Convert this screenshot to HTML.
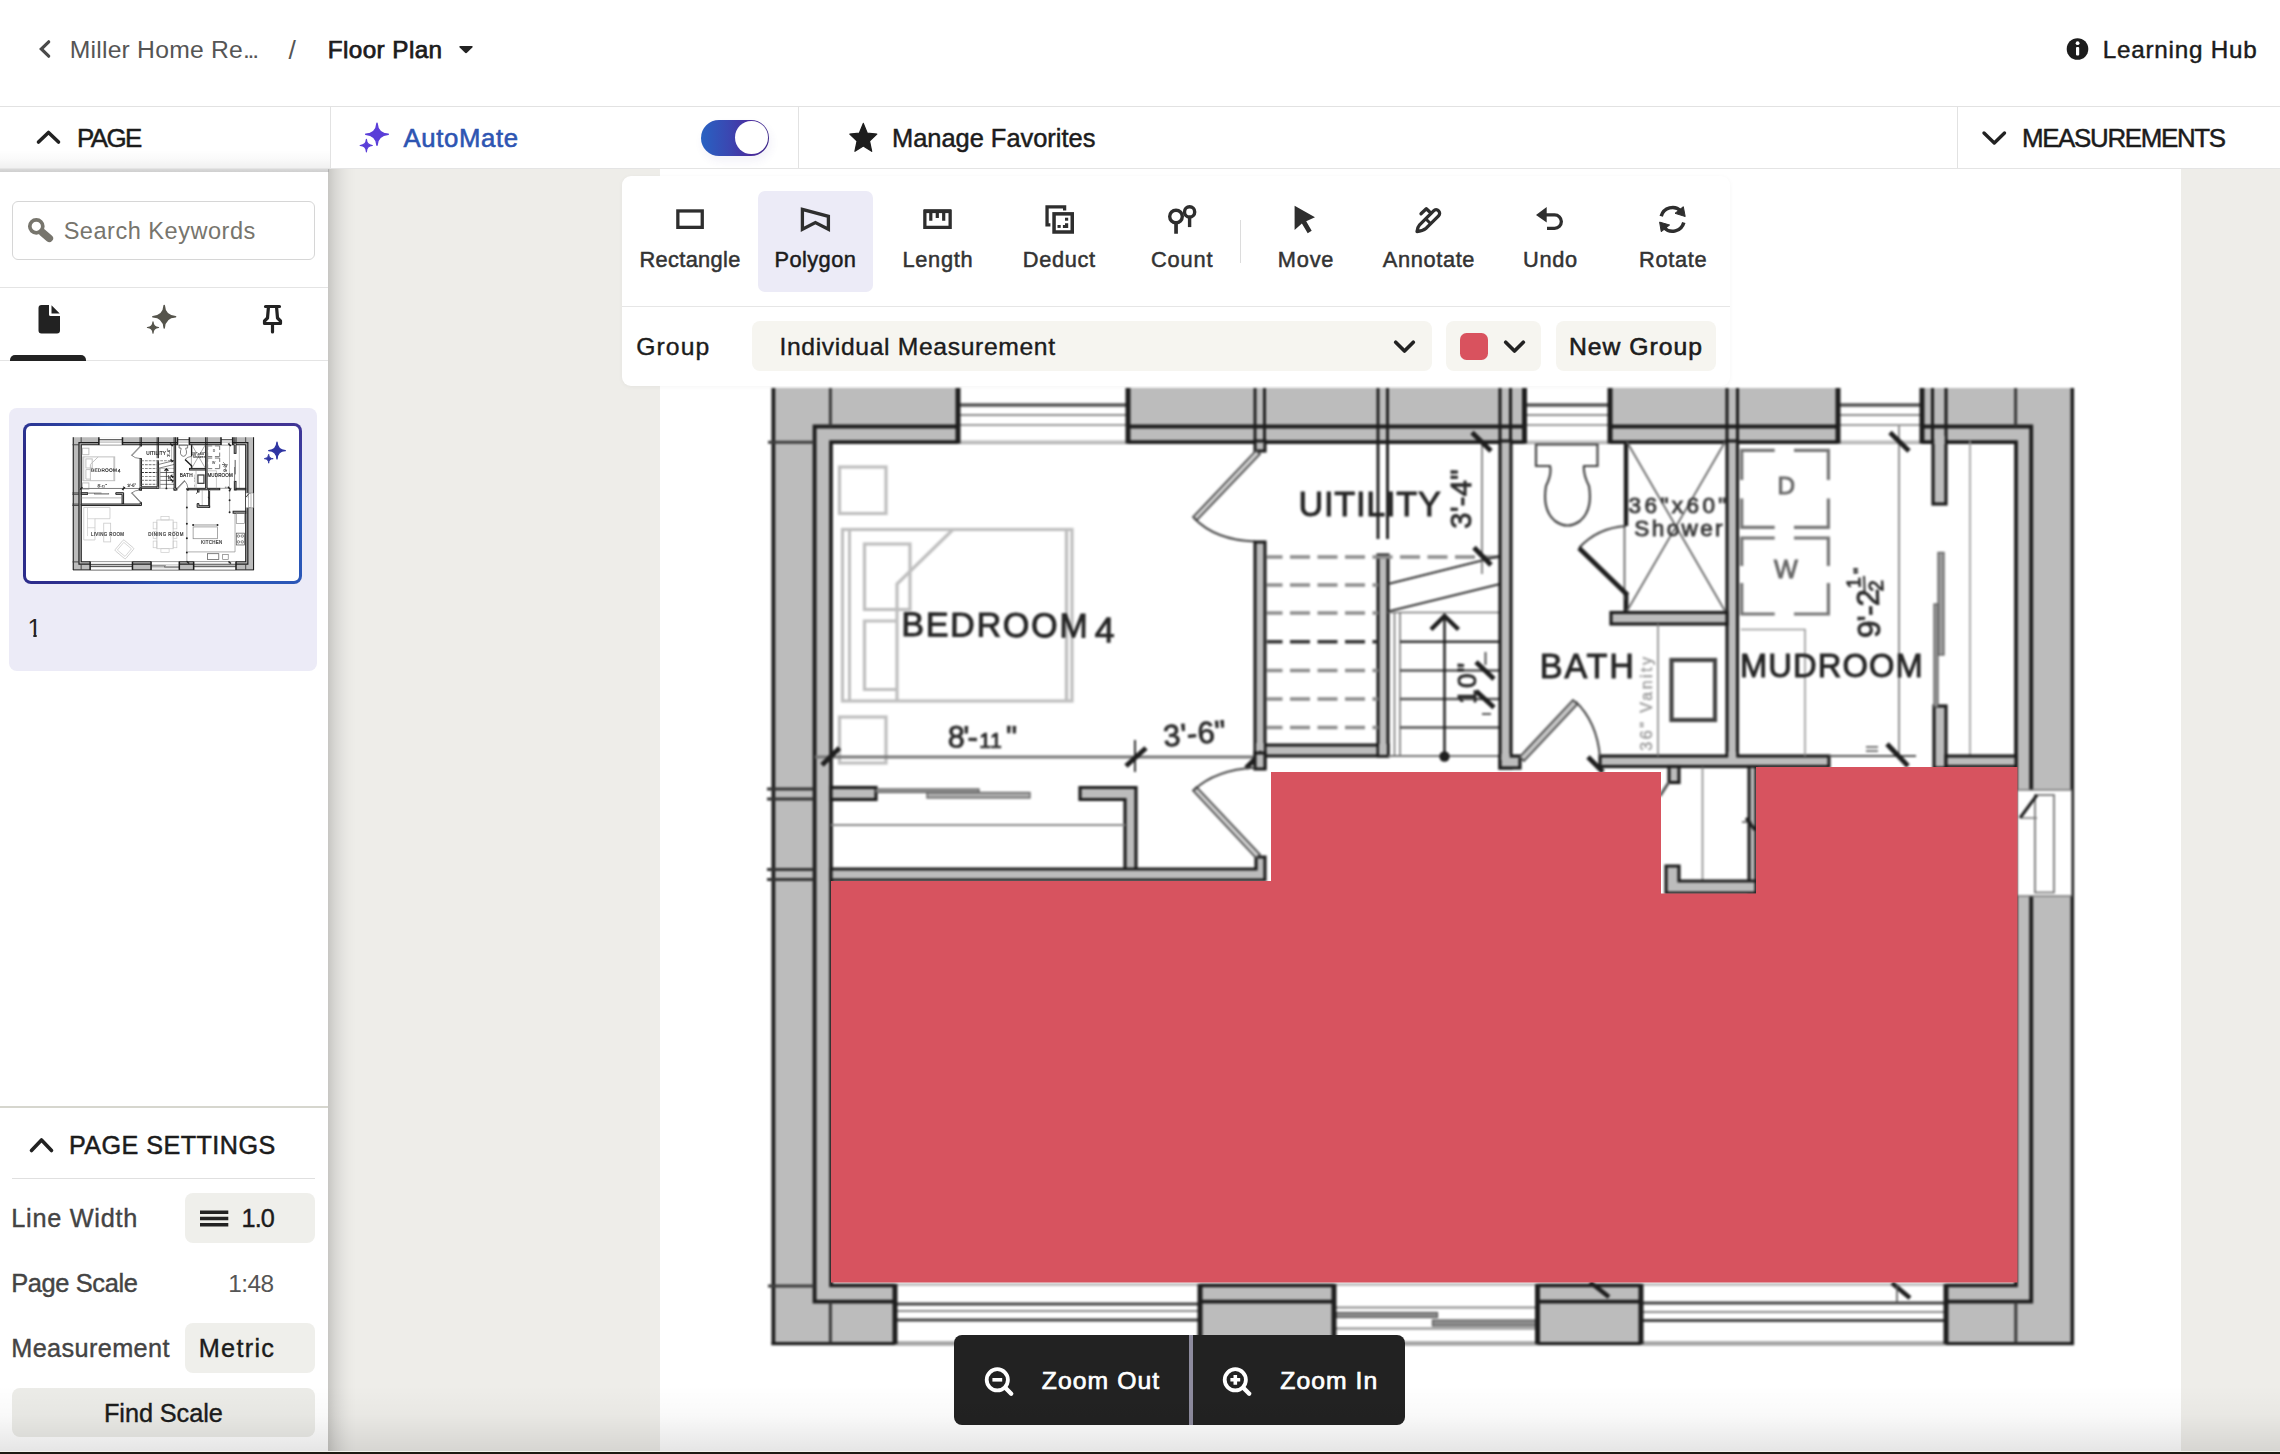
<!DOCTYPE html>
<html lang="en"><head><meta charset="utf-8"><title>Floor Plan</title>
<style>

html,body{margin:0;padding:0}
body{width:2280px;height:1454px;overflow:hidden;position:relative;background:#fff;font-family:"Liberation Sans",sans-serif;}
.t{position:absolute;white-space:nowrap;line-height:1;}
.a{position:absolute}
svg{position:absolute;overflow:visible}

</style></head>
<body>
<main>

<div class="a" style="left:0;top:169px;width:2280px;height:1285px;background:#eeede9"></div>
<div class="a" style="left:660px;top:169px;width:1521px;height:1285px;background:#fff"></div>

<svg style="left:0;top:0" width="2280" height="1454" font-family="Liberation Sans, sans-serif">
<g style="filter:blur(0.95px)"><path d="M771.5 388 H2074 V1345 H771.5Z M831 442 H2016 V1285 H831Z" fill="#bcbcbc" stroke="none" stroke-width="2.60" fill-rule="evenodd"/>
<path d="M814.6 426.5 H2031.2 V1301.6 H814.6Z" fill="none" stroke="#1e1e1e" stroke-width="3.90" />
<path d="M831 442.2 H2016 V1285.4 H831Z" fill="none" stroke="#1e1e1e" stroke-width="3.70" />
<line x1="773.4" y1="388" x2="773.4" y2="1345" stroke="#1e1e1e" stroke-width="3.70" />
<line x1="2072.3" y1="388" x2="2072.3" y2="1345" stroke="#1e1e1e" stroke-width="3.60" />
<line x1="771.5" y1="1343.7" x2="2074" y2="1343.7" stroke="#1e1e1e" stroke-width="3.20" />
<line x1="830.4" y1="388" x2="830.4" y2="426" stroke="#3c3c3c" stroke-width="3.00" />
<line x1="2015.6" y1="388" x2="2015.6" y2="426" stroke="#3c3c3c" stroke-width="3.00" />
<line x1="830.4" y1="1302" x2="830.4" y2="1343" stroke="#3c3c3c" stroke-width="3.00" />
<line x1="2015.8" y1="1302" x2="2015.8" y2="1343" stroke="#3c3c3c" stroke-width="3.00" />
<line x1="768" y1="442.2" x2="814" y2="442.2" stroke="#3c3c3c" stroke-width="3.00" />
<line x1="768" y1="1286" x2="814" y2="1286" stroke="#3c3c3c" stroke-width="3.00" />
<line x1="767" y1="789" x2="814" y2="789" stroke="#333" stroke-width="2.80" />
<line x1="767" y1="799" x2="814" y2="799" stroke="#333" stroke-width="2.80" />
<line x1="767" y1="869.5" x2="814" y2="869.5" stroke="#333" stroke-width="2.80" />
<line x1="767" y1="879.5" x2="814" y2="879.5" stroke="#333" stroke-width="2.80" />
<rect x="958" y="387" width="170.00" height="56.50" fill="#fff"/>
<line x1="958" y1="405" x2="1128" y2="405" stroke="#555" stroke-width="3.40" />
<line x1="958" y1="415" x2="1128" y2="415" stroke="#8a8a8a" stroke-width="1.80" />
<line x1="958" y1="425" x2="1128" y2="425" stroke="#9a9a9a" stroke-width="1.80" />
<line x1="958" y1="441.5" x2="1128" y2="441.5" stroke="#b5b5b5" stroke-width="1.80" />
<line x1="958" y1="388" x2="958" y2="443.5" stroke="#1e1e1e" stroke-width="5.00" />
<line x1="1128" y1="388" x2="1128" y2="443.5" stroke="#1e1e1e" stroke-width="5.00" />
<rect x="1524.5" y="387" width="85.50" height="56.50" fill="#fff"/>
<line x1="1524.5" y1="405" x2="1610" y2="405" stroke="#555" stroke-width="3.40" />
<line x1="1524.5" y1="415" x2="1610" y2="415" stroke="#8a8a8a" stroke-width="1.80" />
<line x1="1524.5" y1="425" x2="1610" y2="425" stroke="#9a9a9a" stroke-width="1.80" />
<line x1="1524.5" y1="441.5" x2="1610" y2="441.5" stroke="#b5b5b5" stroke-width="1.80" />
<line x1="1524.5" y1="388" x2="1524.5" y2="443.5" stroke="#1e1e1e" stroke-width="5.00" />
<line x1="1610" y1="388" x2="1610" y2="443.5" stroke="#1e1e1e" stroke-width="5.00" />
<rect x="1838" y="387" width="84.00" height="56.50" fill="#fff"/>
<line x1="1838" y1="405" x2="1922" y2="405" stroke="#555" stroke-width="3.40" />
<line x1="1838" y1="415" x2="1922" y2="415" stroke="#8a8a8a" stroke-width="1.80" />
<line x1="1838" y1="425" x2="1922" y2="425" stroke="#9a9a9a" stroke-width="1.80" />
<line x1="1838" y1="441.5" x2="1922" y2="441.5" stroke="#b5b5b5" stroke-width="1.80" />
<line x1="1838" y1="388" x2="1838" y2="443.5" stroke="#1e1e1e" stroke-width="5.00" />
<line x1="1922" y1="388" x2="1922" y2="443.5" stroke="#1e1e1e" stroke-width="5.00" />
<rect x="895" y="1283.5" width="305.00" height="61.00" fill="#fff"/>
<line x1="895" y1="1285" x2="1200" y2="1285" stroke="#aaa" stroke-width="1.60" />
<line x1="895" y1="1304" x2="1200" y2="1304" stroke="#444" stroke-width="3.20" />
<line x1="895" y1="1311" x2="1200" y2="1311" stroke="#8a8a8a" stroke-width="1.80" />
<line x1="895" y1="1320" x2="1200" y2="1320" stroke="#444" stroke-width="3.20" />
<line x1="895" y1="1342.5" x2="1200" y2="1342.5" stroke="#8a8a8a" stroke-width="2.00" />
<rect x="1641" y="1283.5" width="305.00" height="61.00" fill="#fff"/>
<line x1="1641" y1="1285" x2="1946" y2="1285" stroke="#aaa" stroke-width="1.60" />
<line x1="1641" y1="1303" x2="1946" y2="1303" stroke="#444" stroke-width="3.20" />
<line x1="1641" y1="1312" x2="1946" y2="1312" stroke="#8a8a8a" stroke-width="1.80" />
<line x1="1641" y1="1320.5" x2="1946" y2="1320.5" stroke="#444" stroke-width="3.20" />
<line x1="1641" y1="1342.5" x2="1946" y2="1342.5" stroke="#8a8a8a" stroke-width="2.00" />
<rect x="1334" y="1283.5" width="203.50" height="61.00" fill="#fff"/>
<line x1="1334" y1="1285" x2="1537.5" y2="1285" stroke="#aaa" stroke-width="1.60" />
<line x1="1334" y1="1307.5" x2="1537.5" y2="1307.5" stroke="#8a8a8a" stroke-width="1.80" />
<rect x="1336" y="1312.5" width="101.50" height="5.00" fill="#8c8c8c" stroke="#555" stroke-width="1.20" />
<rect x="1432.5" y="1320" width="103.50" height="6.00" fill="#8c8c8c" stroke="#555" stroke-width="1.20" />
<line x1="1334" y1="1328.5" x2="1537.5" y2="1328.5" stroke="#8a8a8a" stroke-width="1.80" />
<line x1="1334" y1="1342.5" x2="1537.5" y2="1342.5" stroke="#8a8a8a" stroke-width="2.00" />
<line x1="895" y1="1284" x2="895" y2="1344" stroke="#1e1e1e" stroke-width="5.00" />
<line x1="1200" y1="1284" x2="1200" y2="1344" stroke="#1e1e1e" stroke-width="5.00" />
<line x1="1334" y1="1284" x2="1334" y2="1344" stroke="#1e1e1e" stroke-width="5.00" />
<line x1="1537.5" y1="1284" x2="1537.5" y2="1344" stroke="#1e1e1e" stroke-width="5.00" />
<line x1="1641" y1="1284" x2="1641" y2="1344" stroke="#1e1e1e" stroke-width="5.00" />
<line x1="1946" y1="1284" x2="1946" y2="1344" stroke="#1e1e1e" stroke-width="5.00" />
<line x1="1590" y1="1282" x2="1609" y2="1297" stroke="#1e1e1e" stroke-width="4.40" />
<line x1="1892" y1="1283" x2="1910" y2="1298" stroke="#1e1e1e" stroke-width="4.40" />
<line x1="1897" y1="1285" x2="1897" y2="1303" stroke="#555" stroke-width="1.60" />
<rect x="2017.5" y="790" width="54.00" height="106.00" fill="#fff"/>
<line x1="2017" y1="790" x2="2072" y2="790" stroke="#777" stroke-width="1.50" />
<line x1="2017" y1="896" x2="2072" y2="896" stroke="#777" stroke-width="1.50" />
<rect x="2035" y="795" width="19.00" height="97.50" fill="#fff" stroke="#777" stroke-width="1.80" />
<line x1="2020" y1="818" x2="2037" y2="795" stroke="#1e1e1e" stroke-width="3.00" />
<line x1="2022" y1="818" x2="2037" y2="818" stroke="#777" stroke-width="1.50" />
<line x1="1255" y1="388" x2="1255" y2="441" stroke="#1e1e1e" stroke-width="2.90" />
<line x1="1264.5" y1="388" x2="1264.5" y2="441" stroke="#1e1e1e" stroke-width="2.90" />
<line x1="1378" y1="388" x2="1378" y2="539" stroke="#1e1e1e" stroke-width="2.90" />
<line x1="1387.5" y1="388" x2="1387.5" y2="539" stroke="#1e1e1e" stroke-width="2.90" />
<line x1="1500" y1="388" x2="1500" y2="441" stroke="#1e1e1e" stroke-width="3.10" />
<line x1="1510.5" y1="388" x2="1510.5" y2="441" stroke="#1e1e1e" stroke-width="3.10" />
<line x1="1727" y1="388" x2="1727" y2="441" stroke="#1e1e1e" stroke-width="3.10" />
<line x1="1737.5" y1="388" x2="1737.5" y2="441" stroke="#1e1e1e" stroke-width="3.10" />
<line x1="1932.5" y1="388" x2="1932.5" y2="441" stroke="#1e1e1e" stroke-width="3.10" />
<line x1="1946" y1="388" x2="1946" y2="441" stroke="#1e1e1e" stroke-width="3.10" />
<rect x="839.5" y="467" width="46.50" height="46.50" fill="none" stroke="#bfbfbf" stroke-width="3.20" />
<rect x="839.5" y="717" width="46.50" height="46.00" fill="none" stroke="#bfbfbf" stroke-width="3.20" />
<rect x="842.5" y="529.5" width="229.50" height="171.50" fill="none" stroke="#bfbfbf" stroke-width="3.20" />
<line x1="849.5" y1="530" x2="849.5" y2="701" stroke="#bfbfbf" stroke-width="3.00" />
<line x1="1066.5" y1="530" x2="1066.5" y2="701" stroke="#bfbfbf" stroke-width="3.40" />
<rect x="864.5" y="544" width="45.50" height="65.50" fill="none" stroke="#bfbfbf" stroke-width="3.20" />
<path d="M897 621 H864.5 V689.5 H897" fill="none" stroke="#bfbfbf" stroke-width="3.20" />
<path d="M952.5 530 L897 584 V701" fill="none" stroke="#bfbfbf" stroke-width="3.20" />
<rect x="1255" y="441" width="10.00" height="10.00" fill="#bcbcbc" stroke="#1e1e1e" stroke-width="3.10" />
<path d="M1256 450.500 L1193 517 L1196.500 520.500 L1260 454Z" fill="#cfcfcf" stroke="#4a4a4a" stroke-width="1.80" />
<path d="M1194 518 Q1215 540 1255 541.5" fill="none" stroke="#444" stroke-width="2.00" />
<rect x="1255" y="542" width="10.00" height="226.00" fill="#bcbcbc" stroke="#1e1e1e" stroke-width="3.10" />
<rect x="1265" y="745" width="123.00" height="11.00" fill="#bcbcbc" stroke="#1e1e1e" stroke-width="3.10" />
<rect x="1378" y="555" width="10.00" height="201.00" fill="#bcbcbc" stroke="#1e1e1e" stroke-width="3.10" />
<rect x="1257" y="744" width="6.00" height="13.00" fill="#fff"/>
<rect x="1256.2" y="743" width="7.6" height="15" fill="#bcbcbc"/>
<rect x="1379.2" y="744" width="7.600" height="10.8" fill="#bcbcbc"/>
<line x1="1267" y1="557" x2="1500" y2="557" stroke="#8d8d8d" stroke-width="3.60" stroke-dasharray="20 7.5" stroke-dashoffset="4.5"/>
<line x1="1267" y1="585" x2="1378" y2="585" stroke="#8d8d8d" stroke-width="3.60" stroke-dasharray="20 7.5" stroke-dashoffset="4.5"/>
<line x1="1267" y1="613" x2="1378" y2="613" stroke="#8d8d8d" stroke-width="3.60" stroke-dasharray="20 7.5" stroke-dashoffset="4.5"/>
<line x1="1267" y1="641.8" x2="1378" y2="641.8" stroke="#333" stroke-width="3.60" stroke-dasharray="20 7.5" stroke-dashoffset="4.5"/>
<line x1="1267" y1="670.5" x2="1378" y2="670.5" stroke="#8d8d8d" stroke-width="3.60" stroke-dasharray="20 7.5" stroke-dashoffset="4.5"/>
<line x1="1267" y1="699" x2="1378" y2="699" stroke="#8d8d8d" stroke-width="3.60" stroke-dasharray="20 7.5" stroke-dashoffset="4.5"/>
<line x1="1267" y1="727.5" x2="1378" y2="727.5" stroke="#8d8d8d" stroke-width="3.60" stroke-dasharray="20 7.5" stroke-dashoffset="4.5"/>
<line x1="1388" y1="584" x2="1500" y2="556" stroke="#333" stroke-width="2.00" />
<line x1="1388" y1="611.5" x2="1500" y2="584" stroke="#333" stroke-width="2.00" />
<line x1="1394.5" y1="612.5" x2="1394.5" y2="756" stroke="#777" stroke-width="1.60" />
<line x1="1400" y1="612.5" x2="1400" y2="756" stroke="#777" stroke-width="1.60" />
<line x1="1388" y1="612.5" x2="1500" y2="612.5" stroke="#777" stroke-width="1.60" />
<line x1="1400" y1="641.8" x2="1500" y2="641.8" stroke="#333" stroke-width="2.40" />
<line x1="1400" y1="670.5" x2="1500" y2="670.5" stroke="#555" stroke-width="2.40" />
<line x1="1400" y1="699" x2="1500" y2="699" stroke="#555" stroke-width="2.40" />
<line x1="1400" y1="727.5" x2="1500" y2="727.5" stroke="#555" stroke-width="2.40" />
<line x1="1388" y1="756" x2="1500" y2="756" stroke="#777" stroke-width="1.80" />
<line x1="1444.5" y1="616" x2="1444.5" y2="756" stroke="#1e1e1e" stroke-width="2.40" />
<path d="M1431 629.5 L1444.5 616 L1458.5 629.5" fill="none" stroke="#1e1e1e" stroke-width="4.40" stroke-linejoin="miter"/>
<circle cx="1444.5" cy="756.5" r="5.2" fill="#1e1e1e"/>
<line x1="1482" y1="441" x2="1482" y2="574" stroke="#666" stroke-width="1.50" />
<line x1="1472" y1="432.5" x2="1491" y2="451" stroke="#1e1e1e" stroke-width="4.80" />
<line x1="1474" y1="547.5" x2="1491" y2="565" stroke="#1e1e1e" stroke-width="4.80" />
<line x1="1476" y1="662" x2="1494" y2="679" stroke="#1e1e1e" stroke-width="4.80" />
<line x1="1476" y1="691" x2="1494" y2="707.5" stroke="#1e1e1e" stroke-width="4.80" />
<line x1="1485.5" y1="652" x2="1485.5" y2="665" stroke="#444" stroke-width="1.80" />
<line x1="1482" y1="714" x2="1491" y2="714" stroke="#444" stroke-width="1.80" />
<rect x="1500" y="441" width="11.00" height="327.00" fill="#bcbcbc" stroke="#1e1e1e" stroke-width="3.20" />
<rect x="1500" y="756" width="20.00" height="12.00" fill="#bcbcbc" stroke="#1e1e1e" stroke-width="3.20" />
<rect x="1501.3" y="754" width="8.4" height="6" fill="#bcbcbc"/>
<rect x="1727" y="441" width="10.50" height="315.00" fill="#bcbcbc" stroke="#1e1e1e" stroke-width="3.20" />
<rect x="1600" y="756" width="229.00" height="10.50" fill="#bcbcbc" stroke="#1e1e1e" stroke-width="3.20" />
<rect x="1728.3" y="752" width="7.9" height="8" fill="#bcbcbc"/>
<rect x="1611" y="612.5" width="116.00" height="11.50" fill="#bcbcbc" stroke="#1e1e1e" stroke-width="3.20" />
<line x1="1626" y1="441" x2="1626" y2="526" stroke="#1e1e1e" stroke-width="4.40" />
<line x1="1626" y1="592.5" x2="1626" y2="613" stroke="#1e1e1e" stroke-width="4.80" />
<line x1="1624.5" y1="526" x2="1624.5" y2="600" stroke="#555" stroke-width="1.60" />
<line x1="1627" y1="442" x2="1725" y2="611" stroke="#666" stroke-width="1.80" />
<line x1="1725" y1="442" x2="1627" y2="611" stroke="#666" stroke-width="1.80" />
<path d="M1626 526 Q1597 528 1579 548" fill="none" stroke="#444" stroke-width="2.00" />
<line x1="1579" y1="548" x2="1627.5" y2="595" stroke="#1e1e1e" stroke-width="4.80" />
<path d="M1536 444.5 H1597.500 V466 H1584 Q1583 474 1589 486 Q1593 510 1580 521 Q1567.500 530 1555 521 Q1542 510 1546 486 Q1552 474 1550 466 H1536Z" fill="none" stroke="#444" stroke-width="2.20" />
<line x1="1658" y1="624" x2="1658" y2="756" stroke="#888" stroke-width="1.60" />
<rect x="1671.5" y="660" width="43.50" height="60.00" fill="#fff" stroke="#444" stroke-width="4.20" />
<path d="M1519.500 757 L1573 700 L1577.500 704 L1524 761Z" fill="#c4c4c4" stroke="#4a4a4a" stroke-width="1.80" />
<path d="M1575.500 701.5 Q1597 722 1600 757" fill="none" stroke="#444" stroke-width="2.00" />
<line x1="1588" y1="757" x2="1603" y2="772" stroke="#1e1e1e" stroke-width="4.80" />
<path d="M1741.7 479.9 V450.3 H1774.7 M1794 450.3 H1828.4 V479.9 M1828.4 498.5 V527.4 H1794 M1774.7 527.4 H1741.7 V498.5" fill="none" stroke="#767676" stroke-width="3.20" />
<path d="M1741.7 565.9 V538 H1774.7 M1794 538 H1828.4 V565.9 M1828.4 583 V614 H1794 M1774.7 614 H1741.7 V583" fill="none" stroke="#767676" stroke-width="3.20" />
<path d="M1741 629.5 H1805 V756" fill="none" stroke="#999" stroke-width="1.60" />
<line x1="1899" y1="426" x2="1899" y2="756" stroke="#777" stroke-width="1.60" />
<line x1="1970" y1="441" x2="1970" y2="756" stroke="#999" stroke-width="1.60" />
<line x1="1890" y1="432.5" x2="1909" y2="451" stroke="#1e1e1e" stroke-width="4.80" />
<rect x="1933" y="441" width="13.00" height="63.00" fill="#bcbcbc" stroke="#1e1e1e" stroke-width="3.20" />
<rect x="1934.3" y="436" width="10.4" height="8" fill="#bcbcbc"/>
<rect x="1934" y="706" width="12.00" height="62.00" fill="#bcbcbc" stroke="#1e1e1e" stroke-width="3.20" />
<rect x="1938" y="552.5" width="6.00" height="102.50" fill="#999" stroke="#555" stroke-width="1.20" />
<rect x="1934" y="604" width="4.00" height="103.00" fill="#999" stroke="#555" stroke-width="1.20" />
<rect x="1946" y="756" width="70.00" height="10.50" fill="#bcbcbc" stroke="#1e1e1e" stroke-width="3.20" />
<line x1="1829" y1="756" x2="1916" y2="756" stroke="#555" stroke-width="1.80" />
<line x1="1887" y1="744" x2="1908" y2="766" stroke="#1e1e1e" stroke-width="4.80" />
<line x1="1866" y1="747" x2="1878" y2="747" stroke="#555" stroke-width="1.60" />
<line x1="1866" y1="751" x2="1878" y2="751" stroke="#555" stroke-width="1.60" />
<line x1="815" y1="757" x2="1256" y2="757" stroke="#777" stroke-width="3.20" />
<line x1="822" y1="765" x2="839.5" y2="748" stroke="#1e1e1e" stroke-width="4.80" />
<line x1="1135" y1="740" x2="1135" y2="772" stroke="#333" stroke-width="2.00" />
<line x1="1126" y1="766" x2="1146" y2="748" stroke="#1e1e1e" stroke-width="4.80" />
<line x1="1246" y1="768" x2="1262" y2="752" stroke="#1e1e1e" stroke-width="4.80" />
<rect x="1255" y="753" width="10.00" height="16.00" fill="#bcbcbc" stroke="#1e1e1e" stroke-width="3.10" />
<rect x="831" y="787.5" width="45.00" height="12.00" fill="#bcbcbc" stroke="#1e1e1e" stroke-width="3.20" />
<rect x="876" y="789" width="103.00" height="3.50" fill="#999" stroke="#555" stroke-width="1.20" />
<rect x="927" y="792.5" width="103.00" height="5.50" fill="#aaa" stroke="#555" stroke-width="1.20" />
<path d="M1080 787.5 H1136 V869.5 H1125 V799.5 H1080Z" fill="#bcbcbc" stroke="#1e1e1e" stroke-width="3.20" />
<line x1="831" y1="825" x2="1125" y2="825" stroke="#8a8a8a" stroke-width="2.00" />
<path d="M831 869 H1256 V857 H1265 V880 H831Z" fill="#bcbcbc" stroke="#1e1e1e" stroke-width="3.20" />
<path d="M1256 858 L1193 790.500 L1196.500 787 L1260 854.500Z" fill="#cfcfcf" stroke="#4a4a4a" stroke-width="1.80" />
<path d="M1194 790 Q1215 770 1255 767.5" fill="none" stroke="#444" stroke-width="2.00" />
<rect x="1669" y="766.5" width="10.00" height="16.00" fill="#bcbcbc" stroke="#1e1e1e" stroke-width="3.20" />
<line x1="1669" y1="782" x2="1660" y2="796" stroke="#555" stroke-width="3.00" />
<line x1="1702.5" y1="767" x2="1702.5" y2="882" stroke="#888" stroke-width="1.60" />
<rect x="1749" y="766.5" width="7.00" height="126.50" fill="#bcbcbc" stroke="#1e1e1e" stroke-width="3.10" />
<path d="M1666 866 H1679 V881 H1756 V893 H1666Z" fill="#bcbcbc" stroke="#1e1e1e" stroke-width="3.20" />
<line x1="1742" y1="822" x2="1752" y2="822" stroke="#555" stroke-width="1.60" />
<line x1="1746" y1="818" x2="1755" y2="830" stroke="#1e1e1e" stroke-width="3.00" />
<text transform="translate(994.50,625.00) rotate(0.4)" x="-93.23" y="11.75" font-size="34.16" letter-spacing="1.674" fill="#242424" stroke="#242424" stroke-width="0.95">BEDROOM</text>
<text transform="translate(1104.50,630.00) rotate(0.4)" x="-9.71" y="12.25" font-size="35.61" letter-spacing="0.000" fill="#242424" stroke="#242424" stroke-width="0.95">4</text>
<text transform="translate(1370.50,504.30) rotate(0)" x="-72.06" y="11.75" font-size="34.16" letter-spacing="0.802" fill="#242424" stroke="#242424" stroke-width="0.95">UITILITY</text>
<text transform="translate(1586.80,665.80) rotate(0)" x="-46.98" y="11.75" font-size="34.16" letter-spacing="1.833" fill="#242424" stroke="#242424" stroke-width="0.95">BATH</text>
<text transform="translate(1831.30,665.30) rotate(0)" x="-91.37" y="11.25" font-size="32.70" letter-spacing="1.104" fill="#242424" stroke="#242424" stroke-width="0.95">MUDROOM</text>
<text transform="translate(962.80,737.00) rotate(0.5)" x="-14.87" y="10.50" font-size="30.52" letter-spacing="-1.609" fill="#2c2c2c" stroke="#2c2c2c" stroke-width="0.95">8&#x27;-</text>
<text transform="translate(990.80,740.50) rotate(0.5)" x="-11.58" y="7.25" font-size="21.08" letter-spacing="0.716" fill="#2c2c2c" stroke="#2c2c2c" stroke-width="0.95">11</text>
<text transform="translate(1011.30,743.30) rotate(0.5)" x="-5.22" y="4.00" font-size="30.50" letter-spacing="0.000" fill="#2c2c2c" stroke="#2c2c2c" stroke-width="0.95">&quot;</text>
<text transform="translate(1194.50,733.50) rotate(-5)" x="-31.22" y="10.50" font-size="30.52" letter-spacing="0.425" fill="#2c2c2c" stroke="#2c2c2c" stroke-width="0.95">3&#x27;-6&quot;</text>
<text transform="translate(1460.50,499.00) rotate(-90)" x="-29.66" y="10.00" font-size="29.07" letter-spacing="0.369" fill="#2c2c2c" stroke="#2c2c2c" stroke-width="0.95">3&#x27;-4&quot;</text>
<text transform="translate(1466.50,683.00) rotate(-90)" x="-20.96" y="9.00" font-size="26.16" letter-spacing="1.340" fill="#2c2c2c" stroke="#2c2c2c" stroke-width="0.95">10&quot;</text>
<text transform="translate(1868.50,613.50) rotate(-92)" x="-24.41" y="10.75" font-size="31.25" letter-spacing="-0.708" fill="#2c2c2c" stroke="#2c2c2c" stroke-width="0.95">9&#x27;-2</text>
<text transform="translate(1853.50,583.50) rotate(-92)" x="-4.72" y="6.75" font-size="19.62" letter-spacing="0.000" fill="#2c2c2c" stroke="#2c2c2c" stroke-width="0.95">1</text>
<text transform="translate(1876.00,585.00) rotate(-92)" x="-6.52" y="7.00" font-size="20.35" letter-spacing="0.000" fill="#2c2c2c" stroke="#2c2c2c" stroke-width="0.95">2</text>
<line x1="1864" y1="576" x2="1864.6" y2="591" stroke="#2c2c2c" stroke-width="2.00" />
<text transform="translate(1862.50,570.00) rotate(-92)" x="-3.68" y="3.00" font-size="17.00" letter-spacing="0.000" fill="#2c2c2c" stroke="#2c2c2c" stroke-width="0.95">&quot;</text>
<text transform="translate(1677.50,505.00) rotate(0)" x="-48.90" y="7.75" font-size="22.53" letter-spacing="3.402" fill="#3c3c3c" stroke="#3c3c3c" stroke-width="0.95">36&quot;x60&quot;</text>
<text transform="translate(1678.80,528.50) rotate(0)" x="-44.51" y="7.75" font-size="22.53" letter-spacing="2.396" fill="#3c3c3c" stroke="#3c3c3c" stroke-width="0.95">Shower</text>
<text transform="translate(1646.30,703.50) rotate(-90)" x="-47.14" y="5.50" font-size="15.99" letter-spacing="2.499" fill="#9c9c9c" stroke="#9c9c9c" stroke-width="0.45">36&quot; Vanity</text>
<text transform="translate(1786.80,485.40) rotate(0)" x="-9.19" y="8.35" font-size="24.27" letter-spacing="0.000" fill="#666" stroke="#666" stroke-width="0.95">D</text>
<text transform="translate(1786.40,569.70) rotate(0)" x="-12.53" y="8.65" font-size="25.15" letter-spacing="0.000" fill="#666" stroke="#666" stroke-width="0.95">W</text></g>
<polygon points="831,881 1271,881 1271,772 1661,772 1661,893.5 1756,893.5 1756,767 2017.5,767 2017.5,1282.5 831,1282.5" fill="#d7535f"/>
</svg>
<section>
<div class="a" style="left:622px;top:176px;width:1108px;height:210px;background:#fff;border-radius:9px;box-shadow:0 1px 5px rgba(0,0,0,.045)"></div>
<div class="a" style="left:758px;top:191px;width:115px;height:101px;background:#ecebf7;border-radius:7px"></div>
<div class="a" style="left:622px;top:306px;width:1108px;height:1px;background:#e6e6e6"></div>
<div class="a" style="left:1240px;top:220px;width:1px;height:43px;background:#dcdcdc"></div>
<div class="a" style="left:752px;top:321px;width:680px;height:50px;background:#f6f5f0;border-radius:8px"></div>
<div class="a" style="left:1446px;top:321px;width:95px;height:50px;background:#f6f5f0;border-radius:8px"></div>
<div class="a" style="left:1556px;top:321px;width:160px;height:50px;background:#f6f5f0;border-radius:8px"></div>
<div class="a" style="left:1460px;top:332.500px;width:28px;height:27.500px;background:#d9525e;border-radius:6.500px"></div>
<svg style="left:0;top:0" width="2280" height="400">
<rect x="677.85" y="210.95" width="24.4" height="16.4" fill="none" stroke="#2e2e2e" stroke-width="3.3"/>
<path d="M802.4 209.3 L828.4 216.3 V229.2 L815.4 222.6 L802.4 229.2Z" fill="none" stroke="#2e2e2e" stroke-width="3.3" stroke-linejoin="miter"/>
<path d="M924.85 211.1 H950.15 V227.35 H924.85Z" fill="none" stroke="#2e2e2e" stroke-width="3.3"/>
<path d="M924 211.2 H951" stroke="#2e2e2e" stroke-width="3.8"/>
<path d="M930.8 211 V220.700 M943.7 211 V220.700 M937.3 211 V217.900" stroke="#2e2e2e" stroke-width="3.2"/>
<path d="M1066.250 210.4 H1063 V208.500 H1048.700 V223.200 H1050.400 V226.500 H1045.400 V205.200 H1066.250Z" fill="#2e2e2e"/>
<rect x="1054.05" y="213.85" width="18.2" height="18.15" fill="none" stroke="#2e2e2e" stroke-width="3.5"/>
<rect x="1065" y="217.7" width="3.2" height="3" fill="#2e2e2e"/><rect x="1057.5" y="225" width="3.2" height="2.9" fill="#2e2e2e"/>
<path d="M1065 223.300 H1068.200 V227.900 H1062.900 V225 H1065Z" fill="#2e2e2e"/>
<circle cx="1176" cy="216.500" r="6.3" fill="none" stroke="#2e2e2e" stroke-width="3.4"/><path d="M1176.050 222.500 V233.750" stroke="#2e2e2e" stroke-width="3.7"/>
<circle cx="1189.6" cy="211.9" r="5.1" fill="none" stroke="#2e2e2e" stroke-width="3.4"/><path d="M1189.600 216.500 V227.100" stroke="#2e2e2e" stroke-width="3.4"/>
<path d="M1294.6 205.800 L1315 217.300 L1306.200 221.200 L1311.700 230.800 L1307.700 233.300 L1301.900 223.600 L1294.600 230Z" fill="#2e2e2e"/>
<path d="M1419.600 224.800 L1433.600 210.800 A3.5 3.5 0 0 1 1438.600 215.800 L1426.200 228.200 Q1422.500 231.200 1417 231.500 Q1417.300 227.500 1419.600 224.800Z" fill="none" stroke="#2e2e2e" stroke-width="3.3" stroke-linejoin="round"/>
<path d="M1425.200 218.300 L1430.200 223.300" stroke="#2e2e2e" stroke-width="3"/>
<path d="M1421 213.800 L1426.300 208.700 L1429.500 211.800" fill="none" stroke="#2e2e2e" stroke-width="3.3" stroke-linecap="round" stroke-linejoin="round"/>
<path d="M1546 214.850 H1554.600 A6.750 6.750 0 0 1 1554.600 228.350 H1547" fill="none" stroke="#2e2e2e" stroke-width="3.3"/><path d="M1536 215 L1546.700 207 V222.500Z" fill="#2e2e2e"/>
<path d="M1661.200 216.300 A11.700 11.700 0 0 1 1681 211.200" fill="none" stroke="#2e2e2e" stroke-width="3.5"/><path d="M1683.300 206.700 L1685.200 216.500 L1675 213.300Z" fill="#2e2e2e" stroke="#2e2e2e" stroke-width="1" stroke-linejoin="round"/>
<path d="M1683.800 222.500 A11.700 11.700 0 0 1 1664 227.600" fill="none" stroke="#2e2e2e" stroke-width="3.5"/><path d="M1659.600 222.100 L1661.250 231.700 L1669.600 225Z" fill="#2e2e2e" stroke="#2e2e2e" stroke-width="1" stroke-linejoin="round"/>
<path d="M1395.700 342.300 L1404.500 351 L1413.300 342.300" fill="none" stroke="#222" stroke-width="3.7" stroke-linecap="round" stroke-linejoin="round"/>
<path d="M1505.700 342.300 L1514.500 351 L1523.300 342.300" fill="none" stroke="#222" stroke-width="3.7" stroke-linecap="round" stroke-linejoin="round"/>
</svg>
<span class="t" style="left:639.46px;top:247px;font-size:21.80px;line-height:25px;letter-spacing:0.339px;color:#333;-webkit-text-stroke:0.5px #333;">Rectangle</span>
<span class="t" style="left:774.46px;top:247px;font-size:21.80px;line-height:25px;letter-spacing:0.441px;color:#1c1c1c;-webkit-text-stroke:0.5px #1c1c1c;">Polygon</span>
<span class="t" style="left:902.46px;top:247px;font-size:21.80px;line-height:25px;letter-spacing:0.689px;color:#333;-webkit-text-stroke:0.5px #333;">Length</span>
<span class="t" style="left:1022.76px;top:247px;font-size:21.80px;line-height:25px;letter-spacing:0.670px;color:#333;-webkit-text-stroke:0.5px #333;">Deduct</span>
<span class="t" style="left:1150.91px;top:247px;font-size:21.80px;line-height:25px;letter-spacing:0.849px;color:#333;-webkit-text-stroke:0.5px #333;">Count</span>
<span class="t" style="left:1277.76px;top:247px;font-size:21.80px;line-height:25px;letter-spacing:0.806px;color:#333;-webkit-text-stroke:0.5px #333;">Move</span>
<span class="t" style="left:1382.80px;top:247px;font-size:21.80px;line-height:25px;letter-spacing:0.625px;color:#333;-webkit-text-stroke:0.5px #333;">Annotate</span>
<span class="t" style="left:1523.06px;top:247px;font-size:21.80px;line-height:25px;letter-spacing:0.633px;color:#333;-webkit-text-stroke:0.5px #333;">Undo</span>
<span class="t" style="left:1638.96px;top:247px;font-size:21.80px;line-height:25px;letter-spacing:0.683px;color:#333;-webkit-text-stroke:0.5px #333;">Rotate</span>
<span class="t" style="left:636.26px;top:333px;font-size:24.71px;line-height:27px;letter-spacing:1.083px;color:#1c1c1c;-webkit-text-stroke:0.4px #1c1c1c;">Group</span>
<span class="t" style="left:779.48px;top:333px;font-size:24.71px;line-height:27px;letter-spacing:0.636px;color:#1c1c1c;-webkit-text-stroke:0.4px #1c1c1c;">Individual Measurement</span>
<span class="t" style="left:1569.02px;top:333px;font-size:24.71px;line-height:27px;letter-spacing:1.007px;color:#1c1c1c;-webkit-text-stroke:0.6px #1c1c1c;">New Group</span>
</section>
<section>
<div class="a" style="left:954px;top:1335px;width:451px;height:89.500px;background:#222;border-radius:8px"></div>
<div class="a" style="left:1188.800px;top:1335px;width:4.600px;height:89.500px;background:#8d8b9e"></div>
<svg style="left:0;top:1300px" width="2280" height="154" viewBox="0 1300 2280 154">
<circle cx="997.300" cy="1379.800" r="10.600" fill="none" stroke="#fff" stroke-width="3.800"/><path d="M1005.800 1388.300 L1011.200 1393.700" stroke="#fff" stroke-width="4.400" stroke-linecap="round"/><path d="M992.400 1379.800 H1002.200" stroke="#fff" stroke-width="3.600"/>
<circle cx="1235.300" cy="1379.800" r="10.600" fill="none" stroke="#fff" stroke-width="3.800"/><path d="M1243.800 1388.300 L1249.200 1393.700" stroke="#fff" stroke-width="4.400" stroke-linecap="round"/><path d="M1230.400 1379.800 H1240.200 M1235.300 1374.900 V1384.700" stroke="#fff" stroke-width="3.600"/>
</svg>
<span class="t" style="left:1041.76px;top:1367px;font-size:24.71px;line-height:27px;letter-spacing:1.076px;color:#fff;-webkit-text-stroke:0.7px #fff;">Zoom Out</span>
<span class="t" style="left:1280.26px;top:1367px;font-size:24.71px;line-height:27px;letter-spacing:1.048px;color:#fff;-webkit-text-stroke:0.7px #fff;">Zoom In</span>
</section>
</main>
<aside>
<div class="a" style="left:0;top:168px;width:328.500px;height:4px;background:linear-gradient(#dcdcdc,#cfcfcf)"></div>
<div class="a" style="left:328px;top:169px;width:28px;height:1285px;background:linear-gradient(90deg,rgba(0,0,0,.165),rgba(0,0,0,.096) 25%,rgba(0,0,0,.046) 50%,rgba(0,0,0,.017) 75%,rgba(0,0,0,0))"></div>
<div class="a" style="left:0;top:172px;width:328px;height:1282px;background:#fff"></div>
<div class="a" style="left:12px;top:201px;width:301px;height:56.5px;border:1px solid #d6d6d6;border-radius:6px;background:#fff"></div>
<div class="a" style="left:0;top:287px;width:328px;height:1px;background:#e4e4e4"></div>
<div class="a" style="left:0;top:360px;width:328px;height:1px;background:#e4e4e4"></div>
<div class="a" style="left:10px;top:354.5px;width:76px;height:6px;background:#222;border-radius:5px 5px 0 0"></div>
<svg style="left:0;top:0" width="330" height="1454">
<circle cx="36.300" cy="226.300" r="6.500" fill="none" stroke="#77756d" stroke-width="3.700"/><path d="M42.300 232.300 L49.300 238.300" stroke="#77756d" stroke-width="7.600" stroke-linecap="round"/>
<path d="M41.5 305 H49 V314.5 Q49 316 50.5 316 H60 V330.5 Q60 333.5 57 333.5 H41.5 Q38.5 333.5 38.5 330.5 V308 Q38.5 305 41.5 305Z M51.5 305.3 L59.7 313.5 H51.5Z" fill="#222"/>
<path d="M164.200 305.400 Q164.800 316.100 175.600 316.700 Q164.800 317.300 164.200 328 Q163.600 317.300 152.800 316.700 Q163.600 316.100 164.200 305.400Z" fill="#55544c" stroke="#55544c" stroke-width="1.500" stroke-linejoin="round"/>
<path d="M153 321.900 Q153.300 327.200 158.600 327.500 Q153.300 327.800 153 333.100 Q152.700 327.800 147.400 327.500 Q152.700 327.200 153 321.900Z" fill="#55544c" stroke="#55544c" stroke-width="1.100" stroke-linejoin="round"/>
<path d="M265.5 306.500 H279.500 M268.500 306.500 L267.500 318 L264.500 321 V323.500 H280.500 V321 L277.500 318 L276.500 306.500 M272.500 323.500 V332" fill="none" stroke="#222" stroke-width="3.200" stroke-linejoin="round" stroke-linecap="round"/>
</svg>
<span class="t" style="left:63.64px;top:218px;font-size:23.55px;line-height:26px;letter-spacing:0.514px;color:#77756d;">Search Keywords</span>
<div class="a" style="left:9px;top:408px;width:308px;height:263px;background:#ecebf7;border-radius:8px"></div>
<div class="a" style="left:23px;top:423px;width:279px;height:161px;border-radius:8px;background:conic-gradient(from 0deg,#3a40a5 0deg,#45308f 50deg,#3c3a9c 68deg,#2a57b8 90deg,#2a55b6 180deg,#2d2d8c 235deg,#2b2a86 290deg,#2b52b5 325deg,#3a40a5 360deg)"></div>
<div class="a" style="left:26px;top:426px;width:273px;height:154.500px;border-radius:5px;background:#fff"></div>
<span class="t" style="left:27.43px;top:614px;font-size:25.0px;line-height:28px;color:#222;clip-path:polygon(0 0,100% 0,100% 20.2px,9.3px 20.2px,9.3px 100%,5.9px 100%,5.9px 20.2px,0 20.2px)">1</span>
<div class="a" style="left:0;top:1106px;width:328px;height:2px;background:#d6d6ce"></div>
<div class="a" style="left:12px;top:1178px;width:303px;height:1px;background:#e0e0e0"></div>
<span class="t" style="left:68.99px;top:1131px;font-size:25.15px;line-height:28px;letter-spacing:0.457px;color:#1c1c1c;-webkit-text-stroke:0.5px #1c1c1c;">PAGE SETTINGS</span>
<div class="a" style="left:185px;top:1193px;width:130px;height:50px;background:#efefeb;border-radius:8px"></div>
<div class="a" style="left:185px;top:1323px;width:130px;height:50px;background:#efefeb;border-radius:8px"></div>
<div class="a" style="left:12px;top:1388px;width:303px;height:49px;background:#ecece8;border-radius:8px"></div>
<svg style="left:0;top:0" width="330" height="1454"><path d="M31.500 1150.500 L41.500 1140 L51.500 1150.500" fill="none" stroke="#222" stroke-width="3.6" stroke-linecap="round" stroke-linejoin="round"/><path d="M200 1212.300 H228.300 M200 1218.400 H228.300 M200 1224.700 H228.300" stroke="#222" stroke-width="3.500"/></svg>
<span class="t" style="left:11.28px;top:1204px;font-size:25.29px;line-height:28px;letter-spacing:0.730px;color:#444;-webkit-text-stroke:0.4px #444;">Line Width</span>
<span class="t" style="left:241.60px;top:1204px;font-size:25.29px;line-height:28px;letter-spacing:-0.936px;color:#1c1c1c;-webkit-text-stroke:0.4px #1c1c1c;">1.0</span>
<span class="t" style="left:11.27px;top:1269px;font-size:25.44px;line-height:28px;letter-spacing:-0.392px;color:#444;-webkit-text-stroke:0.4px #444;">Page Scale</span>
<span class="t" style="left:228.17px;top:1270px;font-size:24.42px;line-height:27px;letter-spacing:-0.562px;color:#555;">1:48</span>
<span class="t" style="left:11.28px;top:1334px;font-size:25.29px;line-height:28px;letter-spacing:0.362px;color:#444;-webkit-text-stroke:0.4px #444;">Measurement</span>
<span class="t" style="left:198.68px;top:1334px;font-size:25.29px;line-height:28px;letter-spacing:1.293px;color:#1c1c1c;-webkit-text-stroke:0.4px #1c1c1c;">Metric</span>
<span class="t" style="left:103.98px;top:1399px;font-size:25.29px;line-height:28px;letter-spacing:-0.071px;color:#1c1c1c;-webkit-text-stroke:0.4px #1c1c1c;">Find Scale</span>
<svg style="left:0;top:0" width="330" height="700" font-family="Liberation Sans, sans-serif"><g transform="translate(-34.098 383.396) scale(0.1388)" style="filter:blur(0.25px)">
<path d="M771.5 388 H2074 V1345 H771.5Z M831 442 H2016 V1285 H831Z" fill="#bcbcbc" stroke="none" stroke-width="5.72" fill-rule="evenodd"/>
<path d="M814.6 426.5 H2031.2 V1301.6 H814.6Z" fill="none" stroke="#1e1e1e" stroke-width="8.58" />
<path d="M831 442.2 H2016 V1285.4 H831Z" fill="none" stroke="#1e1e1e" stroke-width="8.14" />
<line x1="773.4" y1="388" x2="773.4" y2="1345" stroke="#1e1e1e" stroke-width="8.14" />
<line x1="2072.3" y1="388" x2="2072.3" y2="1345" stroke="#1e1e1e" stroke-width="7.92" />
<line x1="771.5" y1="1343.7" x2="2074" y2="1343.7" stroke="#1e1e1e" stroke-width="7.04" />
<line x1="830.4" y1="388" x2="830.4" y2="426" stroke="#3c3c3c" stroke-width="6.60" />
<line x1="2015.6" y1="388" x2="2015.6" y2="426" stroke="#3c3c3c" stroke-width="6.60" />
<line x1="830.4" y1="1302" x2="830.4" y2="1343" stroke="#3c3c3c" stroke-width="6.60" />
<line x1="2015.8" y1="1302" x2="2015.8" y2="1343" stroke="#3c3c3c" stroke-width="6.60" />
<line x1="768" y1="442.2" x2="814" y2="442.2" stroke="#3c3c3c" stroke-width="6.60" />
<line x1="768" y1="1286" x2="814" y2="1286" stroke="#3c3c3c" stroke-width="6.60" />
<line x1="767" y1="789" x2="814" y2="789" stroke="#333" stroke-width="6.16" />
<line x1="767" y1="799" x2="814" y2="799" stroke="#333" stroke-width="6.16" />
<line x1="767" y1="869.5" x2="814" y2="869.5" stroke="#333" stroke-width="6.16" />
<line x1="767" y1="879.5" x2="814" y2="879.5" stroke="#333" stroke-width="6.16" />
<rect x="958" y="387" width="170.00" height="56.50" fill="#fff"/>
<line x1="958" y1="405" x2="1128" y2="405" stroke="#555" stroke-width="7.48" />
<line x1="958" y1="415" x2="1128" y2="415" stroke="#8a8a8a" stroke-width="3.96" />
<line x1="958" y1="425" x2="1128" y2="425" stroke="#9a9a9a" stroke-width="3.96" />
<line x1="958" y1="441.5" x2="1128" y2="441.5" stroke="#b5b5b5" stroke-width="3.96" />
<line x1="958" y1="388" x2="958" y2="443.5" stroke="#1e1e1e" stroke-width="11.00" />
<line x1="1128" y1="388" x2="1128" y2="443.5" stroke="#1e1e1e" stroke-width="11.00" />
<rect x="1524.5" y="387" width="85.50" height="56.50" fill="#fff"/>
<line x1="1524.5" y1="405" x2="1610" y2="405" stroke="#555" stroke-width="7.48" />
<line x1="1524.5" y1="415" x2="1610" y2="415" stroke="#8a8a8a" stroke-width="3.96" />
<line x1="1524.5" y1="425" x2="1610" y2="425" stroke="#9a9a9a" stroke-width="3.96" />
<line x1="1524.5" y1="441.5" x2="1610" y2="441.5" stroke="#b5b5b5" stroke-width="3.96" />
<line x1="1524.5" y1="388" x2="1524.5" y2="443.5" stroke="#1e1e1e" stroke-width="11.00" />
<line x1="1610" y1="388" x2="1610" y2="443.5" stroke="#1e1e1e" stroke-width="11.00" />
<rect x="1838" y="387" width="84.00" height="56.50" fill="#fff"/>
<line x1="1838" y1="405" x2="1922" y2="405" stroke="#555" stroke-width="7.48" />
<line x1="1838" y1="415" x2="1922" y2="415" stroke="#8a8a8a" stroke-width="3.96" />
<line x1="1838" y1="425" x2="1922" y2="425" stroke="#9a9a9a" stroke-width="3.96" />
<line x1="1838" y1="441.5" x2="1922" y2="441.5" stroke="#b5b5b5" stroke-width="3.96" />
<line x1="1838" y1="388" x2="1838" y2="443.5" stroke="#1e1e1e" stroke-width="11.00" />
<line x1="1922" y1="388" x2="1922" y2="443.5" stroke="#1e1e1e" stroke-width="11.00" />
<rect x="895" y="1283.5" width="305.00" height="61.00" fill="#fff"/>
<line x1="895" y1="1285" x2="1200" y2="1285" stroke="#aaa" stroke-width="3.52" />
<line x1="895" y1="1304" x2="1200" y2="1304" stroke="#444" stroke-width="7.04" />
<line x1="895" y1="1311" x2="1200" y2="1311" stroke="#8a8a8a" stroke-width="3.96" />
<line x1="895" y1="1320" x2="1200" y2="1320" stroke="#444" stroke-width="7.04" />
<line x1="895" y1="1342.5" x2="1200" y2="1342.5" stroke="#8a8a8a" stroke-width="4.40" />
<rect x="1641" y="1283.5" width="305.00" height="61.00" fill="#fff"/>
<line x1="1641" y1="1285" x2="1946" y2="1285" stroke="#aaa" stroke-width="3.52" />
<line x1="1641" y1="1303" x2="1946" y2="1303" stroke="#444" stroke-width="7.04" />
<line x1="1641" y1="1312" x2="1946" y2="1312" stroke="#8a8a8a" stroke-width="3.96" />
<line x1="1641" y1="1320.5" x2="1946" y2="1320.5" stroke="#444" stroke-width="7.04" />
<line x1="1641" y1="1342.5" x2="1946" y2="1342.5" stroke="#8a8a8a" stroke-width="4.40" />
<rect x="1334" y="1283.5" width="203.50" height="61.00" fill="#fff"/>
<line x1="1334" y1="1285" x2="1537.5" y2="1285" stroke="#aaa" stroke-width="3.52" />
<line x1="1334" y1="1307.5" x2="1537.5" y2="1307.5" stroke="#8a8a8a" stroke-width="3.96" />
<rect x="1336" y="1312.5" width="101.50" height="5.00" fill="#8c8c8c" stroke="#555" stroke-width="2.64" />
<rect x="1432.5" y="1320" width="103.50" height="6.00" fill="#8c8c8c" stroke="#555" stroke-width="2.64" />
<line x1="1334" y1="1328.5" x2="1537.5" y2="1328.5" stroke="#8a8a8a" stroke-width="3.96" />
<line x1="1334" y1="1342.5" x2="1537.5" y2="1342.5" stroke="#8a8a8a" stroke-width="4.40" />
<line x1="895" y1="1284" x2="895" y2="1344" stroke="#1e1e1e" stroke-width="11.00" />
<line x1="1200" y1="1284" x2="1200" y2="1344" stroke="#1e1e1e" stroke-width="11.00" />
<line x1="1334" y1="1284" x2="1334" y2="1344" stroke="#1e1e1e" stroke-width="11.00" />
<line x1="1537.5" y1="1284" x2="1537.5" y2="1344" stroke="#1e1e1e" stroke-width="11.00" />
<line x1="1641" y1="1284" x2="1641" y2="1344" stroke="#1e1e1e" stroke-width="11.00" />
<line x1="1946" y1="1284" x2="1946" y2="1344" stroke="#1e1e1e" stroke-width="11.00" />
<line x1="1590" y1="1282" x2="1609" y2="1297" stroke="#1e1e1e" stroke-width="9.68" />
<line x1="1892" y1="1283" x2="1910" y2="1298" stroke="#1e1e1e" stroke-width="9.68" />
<line x1="1897" y1="1285" x2="1897" y2="1303" stroke="#555" stroke-width="3.52" />
<rect x="2017.5" y="790" width="54.00" height="106.00" fill="#fff"/>
<line x1="2017" y1="790" x2="2072" y2="790" stroke="#777" stroke-width="3.30" />
<line x1="2017" y1="896" x2="2072" y2="896" stroke="#777" stroke-width="3.30" />
<rect x="2035" y="795" width="19.00" height="97.50" fill="#fff" stroke="#777" stroke-width="3.96" />
<line x1="2020" y1="818" x2="2037" y2="795" stroke="#1e1e1e" stroke-width="6.60" />
<line x1="2022" y1="818" x2="2037" y2="818" stroke="#777" stroke-width="3.30" />
<line x1="1255" y1="388" x2="1255" y2="441" stroke="#1e1e1e" stroke-width="6.38" />
<line x1="1264.5" y1="388" x2="1264.5" y2="441" stroke="#1e1e1e" stroke-width="6.38" />
<line x1="1378" y1="388" x2="1378" y2="539" stroke="#1e1e1e" stroke-width="6.38" />
<line x1="1387.5" y1="388" x2="1387.5" y2="539" stroke="#1e1e1e" stroke-width="6.38" />
<line x1="1500" y1="388" x2="1500" y2="441" stroke="#1e1e1e" stroke-width="6.82" />
<line x1="1510.5" y1="388" x2="1510.5" y2="441" stroke="#1e1e1e" stroke-width="6.82" />
<line x1="1727" y1="388" x2="1727" y2="441" stroke="#1e1e1e" stroke-width="6.82" />
<line x1="1737.5" y1="388" x2="1737.5" y2="441" stroke="#1e1e1e" stroke-width="6.82" />
<line x1="1932.5" y1="388" x2="1932.5" y2="441" stroke="#1e1e1e" stroke-width="6.82" />
<line x1="1946" y1="388" x2="1946" y2="441" stroke="#1e1e1e" stroke-width="6.82" />
<rect x="839.5" y="467" width="46.50" height="46.50" fill="none" stroke="#bfbfbf" stroke-width="7.04" />
<rect x="839.5" y="717" width="46.50" height="46.00" fill="none" stroke="#bfbfbf" stroke-width="7.04" />
<rect x="842.5" y="529.5" width="229.50" height="171.50" fill="none" stroke="#bfbfbf" stroke-width="7.04" />
<line x1="849.5" y1="530" x2="849.5" y2="701" stroke="#bfbfbf" stroke-width="6.60" />
<line x1="1066.5" y1="530" x2="1066.5" y2="701" stroke="#bfbfbf" stroke-width="7.48" />
<rect x="864.5" y="544" width="45.50" height="65.50" fill="none" stroke="#bfbfbf" stroke-width="7.04" />
<path d="M897 621 H864.5 V689.5 H897" fill="none" stroke="#bfbfbf" stroke-width="7.04" />
<path d="M952.5 530 L897 584 V701" fill="none" stroke="#bfbfbf" stroke-width="7.04" />
<rect x="1255" y="441" width="10.00" height="10.00" fill="#bcbcbc" stroke="#1e1e1e" stroke-width="6.82" />
<path d="M1256 450.500 L1193 517 L1196.500 520.500 L1260 454Z" fill="#cfcfcf" stroke="#4a4a4a" stroke-width="3.96" />
<path d="M1194 518 Q1215 540 1255 541.5" fill="none" stroke="#444" stroke-width="4.40" />
<rect x="1255" y="542" width="10.00" height="226.00" fill="#bcbcbc" stroke="#1e1e1e" stroke-width="6.82" />
<rect x="1265" y="745" width="123.00" height="11.00" fill="#bcbcbc" stroke="#1e1e1e" stroke-width="6.82" />
<rect x="1378" y="555" width="10.00" height="201.00" fill="#bcbcbc" stroke="#1e1e1e" stroke-width="6.82" />
<rect x="1257" y="744" width="6.00" height="13.00" fill="#fff"/>
<rect x="1256.2" y="743" width="7.6" height="15" fill="#bcbcbc"/>
<rect x="1379.2" y="744" width="7.600" height="10.8" fill="#bcbcbc"/>
<line x1="1267" y1="557" x2="1500" y2="557" stroke="#8d8d8d" stroke-width="7.92" stroke-dasharray="20 7.5" stroke-dashoffset="4.5"/>
<line x1="1267" y1="585" x2="1378" y2="585" stroke="#8d8d8d" stroke-width="7.92" stroke-dasharray="20 7.5" stroke-dashoffset="4.5"/>
<line x1="1267" y1="613" x2="1378" y2="613" stroke="#8d8d8d" stroke-width="7.92" stroke-dasharray="20 7.5" stroke-dashoffset="4.5"/>
<line x1="1267" y1="641.8" x2="1378" y2="641.8" stroke="#333" stroke-width="7.92" stroke-dasharray="20 7.5" stroke-dashoffset="4.5"/>
<line x1="1267" y1="670.5" x2="1378" y2="670.5" stroke="#8d8d8d" stroke-width="7.92" stroke-dasharray="20 7.5" stroke-dashoffset="4.5"/>
<line x1="1267" y1="699" x2="1378" y2="699" stroke="#8d8d8d" stroke-width="7.92" stroke-dasharray="20 7.5" stroke-dashoffset="4.5"/>
<line x1="1267" y1="727.5" x2="1378" y2="727.5" stroke="#8d8d8d" stroke-width="7.92" stroke-dasharray="20 7.5" stroke-dashoffset="4.5"/>
<line x1="1388" y1="584" x2="1500" y2="556" stroke="#333" stroke-width="4.40" />
<line x1="1388" y1="611.5" x2="1500" y2="584" stroke="#333" stroke-width="4.40" />
<line x1="1394.5" y1="612.5" x2="1394.5" y2="756" stroke="#777" stroke-width="3.52" />
<line x1="1400" y1="612.5" x2="1400" y2="756" stroke="#777" stroke-width="3.52" />
<line x1="1388" y1="612.5" x2="1500" y2="612.5" stroke="#777" stroke-width="3.52" />
<line x1="1400" y1="641.8" x2="1500" y2="641.8" stroke="#333" stroke-width="5.28" />
<line x1="1400" y1="670.5" x2="1500" y2="670.5" stroke="#555" stroke-width="5.28" />
<line x1="1400" y1="699" x2="1500" y2="699" stroke="#555" stroke-width="5.28" />
<line x1="1400" y1="727.5" x2="1500" y2="727.5" stroke="#555" stroke-width="5.28" />
<line x1="1388" y1="756" x2="1500" y2="756" stroke="#777" stroke-width="3.96" />
<line x1="1444.5" y1="616" x2="1444.5" y2="756" stroke="#1e1e1e" stroke-width="5.28" />
<path d="M1431 629.5 L1444.5 616 L1458.5 629.5" fill="none" stroke="#1e1e1e" stroke-width="9.68" stroke-linejoin="miter"/>
<circle cx="1444.5" cy="756.5" r="7" fill="#1e1e1e"/>
<line x1="1482" y1="441" x2="1482" y2="574" stroke="#666" stroke-width="3.30" />
<line x1="1472" y1="432.5" x2="1491" y2="451" stroke="#1e1e1e" stroke-width="10.56" />
<line x1="1474" y1="547.5" x2="1491" y2="565" stroke="#1e1e1e" stroke-width="10.56" />
<line x1="1476" y1="662" x2="1494" y2="679" stroke="#1e1e1e" stroke-width="10.56" />
<line x1="1476" y1="691" x2="1494" y2="707.5" stroke="#1e1e1e" stroke-width="10.56" />
<line x1="1485.5" y1="652" x2="1485.5" y2="665" stroke="#444" stroke-width="3.96" />
<line x1="1482" y1="714" x2="1491" y2="714" stroke="#444" stroke-width="3.96" />
<rect x="1500" y="441" width="11.00" height="327.00" fill="#bcbcbc" stroke="#1e1e1e" stroke-width="7.04" />
<rect x="1500" y="756" width="20.00" height="12.00" fill="#bcbcbc" stroke="#1e1e1e" stroke-width="7.04" />
<rect x="1501.3" y="754" width="8.4" height="6" fill="#bcbcbc"/>
<rect x="1727" y="441" width="10.50" height="315.00" fill="#bcbcbc" stroke="#1e1e1e" stroke-width="7.04" />
<rect x="1600" y="756" width="229.00" height="10.50" fill="#bcbcbc" stroke="#1e1e1e" stroke-width="7.04" />
<rect x="1728.3" y="752" width="7.9" height="8" fill="#bcbcbc"/>
<rect x="1611" y="612.5" width="116.00" height="11.50" fill="#bcbcbc" stroke="#1e1e1e" stroke-width="7.04" />
<line x1="1626" y1="441" x2="1626" y2="526" stroke="#1e1e1e" stroke-width="9.68" />
<line x1="1626" y1="592.5" x2="1626" y2="613" stroke="#1e1e1e" stroke-width="10.56" />
<line x1="1624.5" y1="526" x2="1624.5" y2="600" stroke="#555" stroke-width="3.52" />
<line x1="1627" y1="442" x2="1725" y2="611" stroke="#666" stroke-width="3.96" />
<line x1="1725" y1="442" x2="1627" y2="611" stroke="#666" stroke-width="3.96" />
<path d="M1626 526 Q1597 528 1579 548" fill="none" stroke="#444" stroke-width="4.40" />
<line x1="1579" y1="548" x2="1627.5" y2="595" stroke="#1e1e1e" stroke-width="10.56" />
<path d="M1536 444.5 H1597.500 V466 H1584 Q1583 474 1589 486 Q1593 510 1580 521 Q1567.500 530 1555 521 Q1542 510 1546 486 Q1552 474 1550 466 H1536Z" fill="none" stroke="#444" stroke-width="4.84" />
<line x1="1658" y1="624" x2="1658" y2="756" stroke="#888" stroke-width="3.52" />
<rect x="1671.5" y="660" width="43.50" height="60.00" fill="#fff" stroke="#444" stroke-width="9.24" />
<path d="M1519.500 757 L1573 700 L1577.500 704 L1524 761Z" fill="#c4c4c4" stroke="#4a4a4a" stroke-width="3.96" />
<path d="M1575.500 701.5 Q1597 722 1600 757" fill="none" stroke="#444" stroke-width="4.40" />
<line x1="1588" y1="757" x2="1603" y2="772" stroke="#1e1e1e" stroke-width="10.56" />
<path d="M1741.7 479.9 V450.3 H1774.7 M1794 450.3 H1828.4 V479.9 M1828.4 498.5 V527.4 H1794 M1774.7 527.4 H1741.7 V498.5" fill="none" stroke="#767676" stroke-width="7.04" />
<path d="M1741.7 565.9 V538 H1774.7 M1794 538 H1828.4 V565.9 M1828.4 583 V614 H1794 M1774.7 614 H1741.7 V583" fill="none" stroke="#767676" stroke-width="7.04" />
<path d="M1741 629.5 H1805 V756" fill="none" stroke="#999" stroke-width="3.52" />
<line x1="1899" y1="426" x2="1899" y2="756" stroke="#777" stroke-width="3.52" />
<line x1="1970" y1="441" x2="1970" y2="756" stroke="#999" stroke-width="3.52" />
<line x1="1890" y1="432.5" x2="1909" y2="451" stroke="#1e1e1e" stroke-width="10.56" />
<rect x="1933" y="441" width="13.00" height="63.00" fill="#bcbcbc" stroke="#1e1e1e" stroke-width="7.04" />
<rect x="1934.3" y="436" width="10.4" height="8" fill="#bcbcbc"/>
<rect x="1934" y="706" width="12.00" height="62.00" fill="#bcbcbc" stroke="#1e1e1e" stroke-width="7.04" />
<rect x="1938" y="552.5" width="6.00" height="102.50" fill="#999" stroke="#555" stroke-width="2.64" />
<rect x="1934" y="604" width="4.00" height="103.00" fill="#999" stroke="#555" stroke-width="2.64" />
<rect x="1946" y="756" width="70.00" height="10.50" fill="#bcbcbc" stroke="#1e1e1e" stroke-width="7.04" />
<line x1="1829" y1="756" x2="1916" y2="756" stroke="#555" stroke-width="3.96" />
<line x1="1887" y1="744" x2="1908" y2="766" stroke="#1e1e1e" stroke-width="10.56" />
<line x1="1866" y1="747" x2="1878" y2="747" stroke="#555" stroke-width="3.52" />
<line x1="1866" y1="751" x2="1878" y2="751" stroke="#555" stroke-width="3.52" />
<line x1="815" y1="757" x2="1256" y2="757" stroke="#777" stroke-width="7.04" />
<line x1="822" y1="765" x2="839.5" y2="748" stroke="#1e1e1e" stroke-width="10.56" />
<line x1="1135" y1="740" x2="1135" y2="772" stroke="#333" stroke-width="4.40" />
<line x1="1126" y1="766" x2="1146" y2="748" stroke="#1e1e1e" stroke-width="10.56" />
<line x1="1246" y1="768" x2="1262" y2="752" stroke="#1e1e1e" stroke-width="10.56" />
<rect x="1255" y="753" width="10.00" height="16.00" fill="#bcbcbc" stroke="#1e1e1e" stroke-width="6.82" />
<rect x="831" y="787.5" width="45.00" height="12.00" fill="#bcbcbc" stroke="#1e1e1e" stroke-width="7.04" />
<rect x="876" y="789" width="103.00" height="3.50" fill="#999" stroke="#555" stroke-width="2.64" />
<rect x="927" y="792.5" width="103.00" height="5.50" fill="#aaa" stroke="#555" stroke-width="2.64" />
<path d="M1080 787.5 H1136 V869.5 H1125 V799.5 H1080Z" fill="#bcbcbc" stroke="#1e1e1e" stroke-width="7.04" />
<line x1="831" y1="825" x2="1125" y2="825" stroke="#8a8a8a" stroke-width="4.40" />
<path d="M831 869 H1256 V857 H1265 V880 H831Z" fill="#bcbcbc" stroke="#1e1e1e" stroke-width="7.04" />
<path d="M1256 858 L1193 790.500 L1196.500 787 L1260 854.500Z" fill="#cfcfcf" stroke="#4a4a4a" stroke-width="3.96" />
<path d="M1194 790 Q1215 770 1255 767.5" fill="none" stroke="#444" stroke-width="4.40" />
<rect x="1669" y="766.5" width="10.00" height="16.00" fill="#bcbcbc" stroke="#1e1e1e" stroke-width="7.04" />
<line x1="1669" y1="782" x2="1660" y2="796" stroke="#555" stroke-width="6.60" />
<line x1="1702.5" y1="767" x2="1702.5" y2="882" stroke="#888" stroke-width="3.52" />
<rect x="1749" y="766.5" width="7.00" height="126.50" fill="#bcbcbc" stroke="#1e1e1e" stroke-width="6.82" />
<path d="M1666 866 H1679 V881 H1756 V893 H1666Z" fill="#bcbcbc" stroke="#1e1e1e" stroke-width="7.04" />
<line x1="1742" y1="822" x2="1752" y2="822" stroke="#555" stroke-width="3.52" />
<line x1="1746" y1="818" x2="1755" y2="830" stroke="#1e1e1e" stroke-width="6.60" />
<text transform="translate(994.50,625.00) rotate(0.4)" x="-93.23" y="11.75" font-size="34.16" letter-spacing="1.674" fill="#242424" stroke="#242424" stroke-width="1.2349999999999999">BEDROOM</text>
<text transform="translate(1104.50,630.00) rotate(0.4)" x="-9.71" y="12.25" font-size="35.61" letter-spacing="0.000" fill="#242424" stroke="#242424" stroke-width="1.2349999999999999">4</text>
<text transform="translate(1370.50,504.30) rotate(0)" x="-72.06" y="11.75" font-size="34.16" letter-spacing="0.802" fill="#242424" stroke="#242424" stroke-width="1.2349999999999999">UITILITY</text>
<text transform="translate(1586.80,665.80) rotate(0)" x="-46.98" y="11.75" font-size="34.16" letter-spacing="1.833" fill="#242424" stroke="#242424" stroke-width="1.2349999999999999">BATH</text>
<text transform="translate(1831.30,665.30) rotate(0)" x="-91.37" y="11.25" font-size="32.70" letter-spacing="1.104" fill="#242424" stroke="#242424" stroke-width="1.2349999999999999">MUDROOM</text>
<text transform="translate(962.80,737.00) rotate(0.5)" x="-14.87" y="10.50" font-size="30.52" letter-spacing="-1.609" fill="#2c2c2c" stroke="#2c2c2c" stroke-width="1.2349999999999999">8&#x27;-</text>
<text transform="translate(990.80,740.50) rotate(0.5)" x="-11.58" y="7.25" font-size="21.08" letter-spacing="0.716" fill="#2c2c2c" stroke="#2c2c2c" stroke-width="1.2349999999999999">11</text>
<text transform="translate(1011.30,743.30) rotate(0.5)" x="-5.22" y="4.00" font-size="30.50" letter-spacing="0.000" fill="#2c2c2c" stroke="#2c2c2c" stroke-width="1.2349999999999999">&quot;</text>
<text transform="translate(1194.50,733.50) rotate(-5)" x="-31.22" y="10.50" font-size="30.52" letter-spacing="0.425" fill="#2c2c2c" stroke="#2c2c2c" stroke-width="1.2349999999999999">3&#x27;-6&quot;</text>
<text transform="translate(1460.50,499.00) rotate(-90)" x="-29.66" y="10.00" font-size="29.07" letter-spacing="0.369" fill="#2c2c2c" stroke="#2c2c2c" stroke-width="1.2349999999999999">3&#x27;-4&quot;</text>
<text transform="translate(1466.50,683.00) rotate(-90)" x="-20.96" y="9.00" font-size="26.16" letter-spacing="1.340" fill="#2c2c2c" stroke="#2c2c2c" stroke-width="1.2349999999999999">10&quot;</text>
<text transform="translate(1868.50,613.50) rotate(-92)" x="-24.41" y="10.75" font-size="31.25" letter-spacing="-0.708" fill="#2c2c2c" stroke="#2c2c2c" stroke-width="1.2349999999999999">9&#x27;-2</text>
<text transform="translate(1853.50,583.50) rotate(-92)" x="-4.72" y="6.75" font-size="19.62" letter-spacing="0.000" fill="#2c2c2c" stroke="#2c2c2c" stroke-width="1.2349999999999999">1</text>
<text transform="translate(1876.00,585.00) rotate(-92)" x="-6.52" y="7.00" font-size="20.35" letter-spacing="0.000" fill="#2c2c2c" stroke="#2c2c2c" stroke-width="1.2349999999999999">2</text>
<line x1="1864" y1="576" x2="1864.6" y2="591" stroke="#2c2c2c" stroke-width="4.40" />
<text transform="translate(1862.50,570.00) rotate(-92)" x="-3.68" y="3.00" font-size="17.00" letter-spacing="0.000" fill="#2c2c2c" stroke="#2c2c2c" stroke-width="1.2349999999999999">&quot;</text>
<text transform="translate(1677.50,505.00) rotate(0)" x="-48.90" y="7.75" font-size="22.53" letter-spacing="3.402" fill="#3c3c3c" stroke="#3c3c3c" stroke-width="1.2349999999999999">36&quot;x60&quot;</text>
<text transform="translate(1678.80,528.50) rotate(0)" x="-44.51" y="7.75" font-size="22.53" letter-spacing="2.396" fill="#3c3c3c" stroke="#3c3c3c" stroke-width="1.2349999999999999">Shower</text>
<text transform="translate(1646.30,703.50) rotate(-90)" x="-47.14" y="5.50" font-size="15.99" letter-spacing="2.499" fill="#9c9c9c" stroke="#9c9c9c" stroke-width="0.5850000000000001">36&quot; Vanity</text>
<text transform="translate(1786.80,485.40) rotate(0)" x="-9.19" y="8.35" font-size="24.27" letter-spacing="0.000" fill="#666" stroke="#666" stroke-width="1.2349999999999999">D</text>
<text transform="translate(1786.40,569.70) rotate(0)" x="-12.53" y="8.65" font-size="25.15" letter-spacing="0.000" fill="#666" stroke="#666" stroke-width="1.2349999999999999">W</text>
<line x1="1592" y1="767" x2="1592" y2="1282" stroke="#555" stroke-width="3.52" />
<circle cx="1592" cy="894" r="7" fill="#222"/>
<circle cx="1592" cy="1011" r="7" fill="#222"/>
<circle cx="1592" cy="1115" r="7" fill="#222"/>
<circle cx="1592" cy="1218" r="7" fill="#222"/>
<line x1="1900" y1="767" x2="1900" y2="935" stroke="#555" stroke-width="3.52" />
<circle cx="1900" cy="772" r="7" fill="#222"/>
<circle cx="1900" cy="842" r="7" fill="#222"/>
<circle cx="1900" cy="928" r="7" fill="#222"/>
<path d="M849 894 H1038 V975 H930 V1128 H849Z" fill="none" stroke="#c9c9c9" stroke-width="5.72" />
<path d="M876 894 V1100 M876 975 H930 M876 1040 H930" fill="none" stroke="#c9c9c9" stroke-width="4.84" />
<rect x="993" y="1007" width="50.00" height="135.00" fill="none" stroke="#c9c9c9" stroke-width="5.72" />
<rect x="-50" y="-50" width="100" height="100" rx="8" fill="none" stroke="#c9c9c9" stroke-width="5.720000000000001" transform="translate(1142 1196) rotate(40)"/>
<rect x="-36" y="-36" width="72" height="72" fill="none" stroke="#c9c9c9" stroke-width="4.840000000000001" transform="translate(1142 1196) rotate(40)"/>
<rect x="1376" y="984" width="117.00" height="207.00" fill="none" stroke="#c9c9c9" stroke-width="5.72" />
<rect x="1349" y="1000" width="27.00" height="48.00" fill="none" stroke="#c9c9c9" stroke-width="4.84" />
<rect x="1493" y="1000" width="27.00" height="48.00" fill="none" stroke="#c9c9c9" stroke-width="4.84" />
<rect x="1349" y="1068" width="27.00" height="48.00" fill="none" stroke="#c9c9c9" stroke-width="4.84" />
<rect x="1493" y="1068" width="27.00" height="48.00" fill="none" stroke="#c9c9c9" stroke-width="4.84" />
<rect x="1349" y="1136" width="27.00" height="48.00" fill="none" stroke="#c9c9c9" stroke-width="4.84" />
<rect x="1493" y="1136" width="27.00" height="48.00" fill="none" stroke="#c9c9c9" stroke-width="4.84" />
<rect x="1405" y="958" width="59.00" height="26.00" fill="none" stroke="#c9c9c9" stroke-width="4.84" />
<rect x="1405" y="1191" width="59.00" height="26.00" fill="none" stroke="#c9c9c9" stroke-width="4.84" />
<rect x="1637" y="1034" width="176.00" height="85.00" fill="none" stroke="#888" stroke-width="5.28" />
<line x1="1637" y1="1020" x2="1813" y2="1020" stroke="#444" stroke-width="3.96" />
<circle cx="1637" cy="1020" r="7" fill="#222"/><circle cx="1813" cy="1020" r="7" fill="#222"/>
<path d="M1597 1214 H1939 V930" fill="none" stroke="#888" stroke-width="4.84" />
<rect x="1925" y="921" width="91.00" height="14.00" fill="#bcbcbc" stroke="#1e1e1e" stroke-width="7.04" />
<rect x="1948" y="1079" width="58.00" height="85.00" fill="none" stroke="#555" stroke-width="5.28" />
<circle cx="1963" cy="1100" r="9" fill="none" stroke="#444" stroke-width="4.4"/>
<circle cx="1991" cy="1100" r="9" fill="none" stroke="#444" stroke-width="4.4"/>
<circle cx="1963" cy="1142" r="9" fill="none" stroke="#444" stroke-width="4.4"/>
<circle cx="1991" cy="1142" r="9" fill="none" stroke="#444" stroke-width="4.4"/>
<rect x="1741" y="1227" width="81.00" height="41.00" fill="none" stroke="#555" stroke-width="5.28" />
<rect x="1850" y="1232" width="40.00" height="36.00" fill="none" stroke="#777" stroke-width="4.84" />
<rect x="1948" y="935" width="58.00" height="75.00" fill="none" stroke="#888" stroke-width="4.84" />
<text transform="translate(1020.00,1092.00) rotate(0)" x="-119.56" y="11.00" font-size="31.98" letter-spacing="2.599" fill="#333" stroke="#333" stroke-width="1.2349999999999999">LIVING ROOM</text>
<text transform="translate(1441.00,1092.00) rotate(0)" x="-126.56" y="11.00" font-size="31.98" letter-spacing="3.296" fill="#333" stroke="#333" stroke-width="1.2349999999999999">DINING ROOM</text>
<text transform="translate(1770.00,1144.00) rotate(0)" x="-76.56" y="11.00" font-size="31.98" letter-spacing="2.150" fill="#333" stroke="#333" stroke-width="1.2349999999999999">KITCHEN</text>
</g><path d="M277 442.300 Q277.400 450.200 285.300 450.600 Q277.400 451 277 458.900 Q276.600 451 268.700 450.600 Q276.600 450.200 277 442.300Z" fill="#2f35a2" stroke="#2f35a2" stroke-width="1.4" stroke-linejoin="round"/><path d="M268.700 454.300 Q268.900 458.500 273.200 458.700 Q268.900 458.900 268.700 463.200 Q268.500 458.900 264.300 458.700 Q268.500 458.500 268.700 454.300Z" fill="#2f35a2" stroke="#2f35a2" stroke-width="0.9" stroke-linejoin="round"/></svg>
</aside>
<header>
<div class="a" style="left:0;top:0;width:2280px;height:106px;background:#fff;border-bottom:1px solid #e2e2e2"></div>
<div class="a" style="left:0;top:107px;width:2280px;height:61px;background:#fff;border-bottom:1px solid #e4e4e4"></div>
<div class="a" style="left:0;top:150px;width:330px;height:18px;background:linear-gradient(rgba(0,0,0,0),rgba(0,0,0,.018) 50%,rgba(0,0,0,.06))"></div>
<div class="a" style="left:330px;top:107px;width:1px;height:61px;background:#e2e2e2"></div>
<div class="a" style="left:798px;top:107px;width:1px;height:61px;background:#e2e2e2"></div>
<div class="a" style="left:1957px;top:107px;width:1px;height:61px;background:#e2e2e2"></div>
<svg style="left:0;top:0" width="2280" height="170"><path d="M48.700 41.800 L41.300 49 L48.700 56.200" fill="none" stroke="#4a4a4a" stroke-width="3.200" stroke-linecap="round" stroke-linejoin="miter"/><path d="M460.3 46 H471.7 Q473.6 46 472.3 47.5 L467.2 52.6 Q466 53.7 464.8 52.6 L459.7 47.5 Q458.4 46 460.3 46Z" fill="#222"/><path d="M38.5 142 L48.5 132.5 L58.5 142" fill="none" stroke="#222" stroke-width="3.6" stroke-linecap="round" stroke-linejoin="round"/><path d="M1984 133 L1994.3 143 L2004.5 133" fill="none" stroke="#222" stroke-width="3.4" stroke-linecap="round" stroke-linejoin="round"/><circle cx="2077.5" cy="49" r="10.8" fill="#1c1c1c"/><rect x="2076" y="47" width="3.2" height="8.5" rx="1" fill="#fff"/><circle cx="2077.6" cy="43.2" r="1.9" fill="#fff"/><path d="M377 123.300 Q377.700 133.600 388.300 134.300 Q377.700 135 377 145.200 Q376.300 135 365.700 134.300 Q376.300 133.600 377 123.300Z" fill="#5a3ed8" stroke="#5a3ed8" stroke-width="1.5" stroke-linejoin="round"/><path d="M366.400 139.400 Q366.700 145.100 372.300 145.500 Q366.700 145.900 366.400 151.800 Q366.100 145.900 360.200 145.500 Q366.100 145.100 366.400 139.400Z" fill="#5a3ed8" stroke="#5a3ed8" stroke-width="1.2" stroke-linejoin="round"/><path d="M863.3 123.4 L867.2 133.0 L876.8 134.1 L869.5 141.0 L871.7 151.3 L863.3 146.0 L854.9 151.3 L857.1 141.0 L849.8 134.1 L859.4 133.0Z" fill="#1d1d1d" stroke="#1d1d1d" stroke-width="1.2" stroke-linejoin="round"/></svg>
<span class="t" style="left:69.72px;top:36px;font-size:24.71px;line-height:27px;letter-spacing:0.219px;color:#555;">Miller Home Re</span>
<span class="t" style="left:242.98px;top:36px;font-size:24.71px;line-height:27px;letter-spacing:-2.281px;color:#555;">...</span>
<span class="t" style="left:288.50px;top:35px;font-size:26.50px;line-height:30px;letter-spacing:0.000px;color:#555;">/</span>
<span class="t" style="left:327.76px;top:36px;font-size:24.27px;line-height:27px;letter-spacing:0.417px;color:#1c1c1c;-webkit-text-stroke:0.75px #1c1c1c;">Floor Plan</span>
<span class="t" style="left:2102.76px;top:36px;font-size:24.27px;line-height:27px;letter-spacing:0.750px;color:#1c1c1c;-webkit-text-stroke:0.45px #1c1c1c;">Learning Hub</span>
<span class="t" style="left:76.93px;top:124px;font-size:25.87px;line-height:28px;letter-spacing:-1.560px;color:#1c1c1c;-webkit-text-stroke:0.5px #1c1c1c;">PAGE</span>
<span class="t" style="left:403.50px;top:124px;font-size:25.73px;line-height:28px;letter-spacing:0.650px;color:#2e55b2;-webkit-text-stroke:0.6px #2e55b2;">AutoMate</span>
<span class="t" style="left:891.97px;top:124px;font-size:25.44px;line-height:28px;letter-spacing:-0.013px;color:#1c1c1c;-webkit-text-stroke:0.5px #1c1c1c;">Manage Favorites</span>
<span class="t" style="left:2021.93px;top:124px;font-size:25.87px;line-height:28px;letter-spacing:-1.296px;color:#1c1c1c;-webkit-text-stroke:0.5px #1c1c1c;">MEASUREMENTS</span>
<div class="a" style="left:701.200px;top:119.800px;width:67.600px;height:36.200px;border-radius:18.100px;background:linear-gradient(90deg,#2862c2 0%,#3a48b2 40%,#4a2c9e 75%,#3c2888 100%);box-shadow:2px 5px 10px rgba(70,60,160,.07)"></div>
<div class="a" style="left:735px;top:121.200px;width:32.900px;height:33.300px;border-radius:50%;background:#fff"></div>
</header>

<div class="a" style="left:0;top:1385px;width:2280px;height:67px;background:linear-gradient(rgba(0,0,0,0),rgba(0,0,0,.025) 45%,rgba(0,0,0,.10));pointer-events:none"></div>
<div class="a" style="left:0;top:1451px;width:2280px;height:1px;background:#f4f3ec"></div>
<div class="a" style="left:0;top:1452px;width:2280px;height:2px;background:#1d1b12"></div>

</body></html>
